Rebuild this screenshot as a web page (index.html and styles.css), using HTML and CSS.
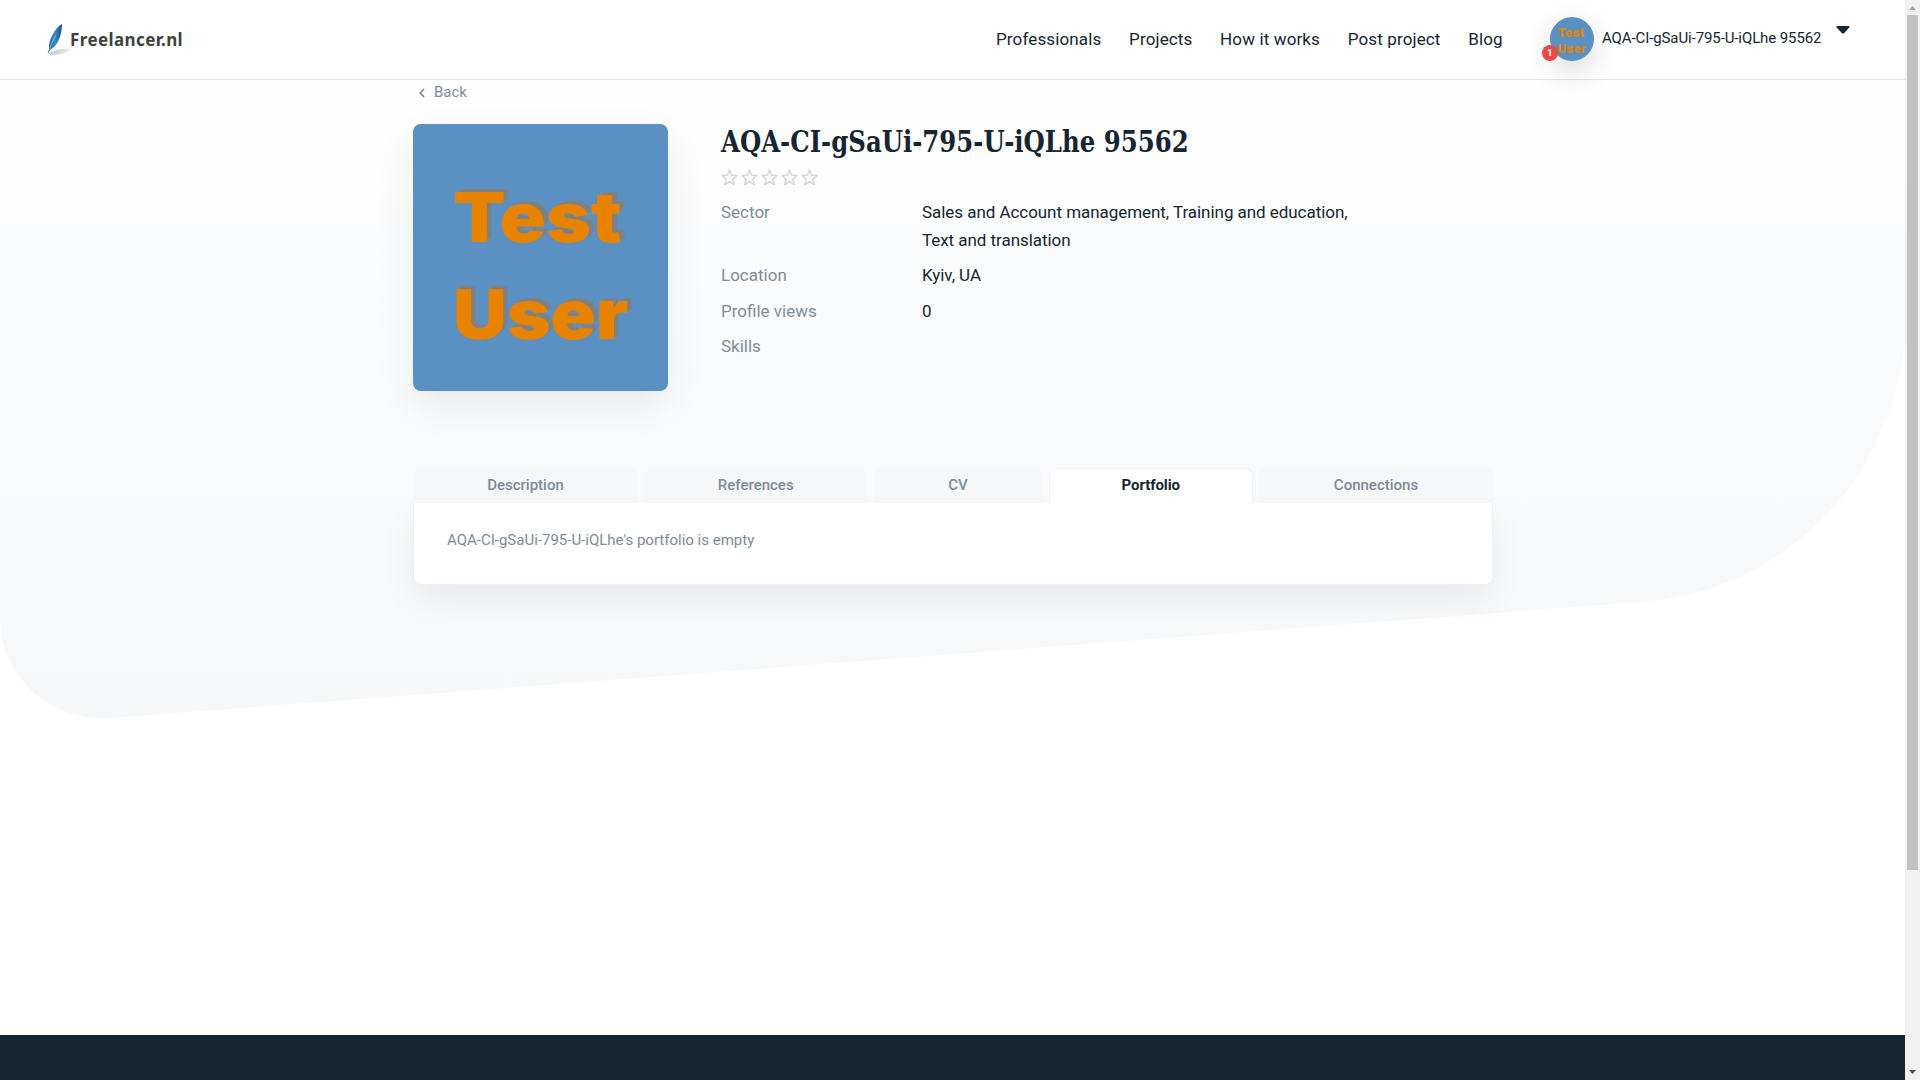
FILE: index.html
```html
<!DOCTYPE html>
<html lang="en">
<head>
<meta charset="utf-8">
<title>AQA-CI-gSaUi-795-U-iQLhe 95562 - Freelancer.nl</title>
<link rel="stylesheet" href="styles.css">
</head>
<body>
<div class="page">
  <svg class="backdrop" width="1905" height="720" viewBox="0 0 1905 720" aria-hidden="true">
    <defs>
      <linearGradient id="shade" x1="0" y1="0" x2="0" y2="1">
        <stop offset="0" stop-color="#fefefe"/>
        <stop offset=".45" stop-color="#fafbfd"/>
        <stop offset="1" stop-color="#f5f7f9"/>
      </linearGradient>
    </defs>
    <path fill="url(#shade)" d="M0 80H1905V340C1890 480 1788 590 1640 602L110 718C50 722 0 677 0 617Z"/>
  </svg>
  <header class="header">
    <a class="logo">
      <svg class="feather" width="26" height="34" viewBox="0 0 26 34">
        <defs>
          <linearGradient id="quill" x1="0" y1="0" x2="1" y2="0">
            <stop offset="0" stop-color="#1c62a8"/>
            <stop offset=".5" stop-color="#3d8ac6"/>
            <stop offset="1" stop-color="#0c4f8f"/>
          </linearGradient>
          <linearGradient id="shadow" x1="0" y1="0" x2="1" y2="0">
            <stop offset="0" stop-color="#c4c4c4"/>
            <stop offset="1" stop-color="#f4f4f4"/>
          </linearGradient>
        </defs>
        <path fill="url(#shadow)" d="M1 31C7 26 17 25 25 26C20 30 12 33 1 31Z"/>
        <path fill="url(#quill)" d="M15 1C8 5 1 17 2 26L.6 31L3.500 26.500C11 23 15 11 15 1Z"/>
        <path fill="none" stroke="#9cc8e8" stroke-width=".7" d="M2.500 27C4 21 6 17 9 12"/>
      </svg>
      <span class="logo-name">Freelancer.nl</span>
    </a>
    <nav class="nav">
      <a>Professionals</a><a>Projects</a><a>How it works</a><a>Post project</a><a>Blog</a>
    </nav>
    <div class="account">
      <div class="avatar"><span>Test</span><span>User</span><b class="badge">1</b></div>
      <span class="account-name">AQA-CI-gSaUi-795-U-iQLhe 95562</span>
      <svg class="caret" width="14" height="8" viewBox="0 0 14 8"><path fill="#152532" d="M1 0H13Q14 .5 13.300 1.500L8 7.200Q7 8 6 7.200L.7 1.500Q0 .5 1 0Z"/></svg>
    </div>
  </header>
  <main class="main">
    <a class="back"><svg width="6" height="10" viewBox="0 0 6 10"><path fill="none" stroke="#7d8b99" stroke-width="1.800" d="M5 1L1.300 5L5 9"/></svg><span>Back</span></a>
    <section class="profile">
      <div class="photo"><span class="first">Test</span><span class="last">User</span></div>
      <div class="info">
        <h1><span class="title">AQA-CI-gSaUi-795-U-iQLhe 95562</span></h1>
        <div class="stars">
          <svg width="97" height="17" viewBox="0 0 97 17">
            <defs><path id="star" fill="none" stroke="#d5d9de" stroke-width="1.600" stroke-linejoin="round" d="M8.500 1L10.600 6.100L16 6.500L11.900 10.100L13.200 15.500L8.500 12.600L3.800 15.500L5.100 10.100L1 6.500L6.400 6.100Z"/></defs>
            <use href="#star"/><use href="#star" x="20"/><use href="#star" x="40"/><use href="#star" x="60"/><use href="#star" x="80"/>
          </svg>
        </div>
        <dl class="fields">
          <dt>Sector</dt><dd>Sales and Account management, Training and education, Text and translation</dd>
          <dt>Location</dt><dd>Kyiv, UA</dd>
          <dt>Profile views</dt><dd>0</dd>
          <dt>Skills</dt><dd></dd>
        </dl>
      </div>
    </section>
    <section class="panel">
      <div class="tabs">
        <a>Description</a><a>References</a><a>CV</a><a class="active">Portfolio</a><a>Connections</a>
      </div>
      <div class="card">AQA-CI-gSaUi-795-U-iQLhe's portfolio is empty</div>
    </section>
  </main>
  <footer class="footer"></footer>
</div>
<aside class="scrollbar">
  <svg width="7" height="4" viewBox="0 0 7 4"><path fill="#a3a3a3" d="M0 4L3.500 0L7 4Z"/></svg>
  <div class="thumb"></div>
  <svg class="down" width="7" height="4" viewBox="0 0 7 4"><path fill="#505050" d="M0 0H7L3.500 4Z"/></svg>
</aside>
</body>
</html>
```
FILE: styles.css
```css
* { box-sizing: border-box; }
body {
  margin: 0;
  height: 1080px;
  display: flex;
  overflow: hidden;
  background: #fff;
  color: #152532;
  font-family: Roboto, sans-serif;
}
.page {
  position: relative;
  width: 1905px;
  height: 1080px;
  display: flex;
  flex-direction: column;
}
.backdrop { position: absolute; left: 0; top: 0; z-index: -1; }
.header {
  height: 80px;
  display: flex;
  align-items: flex-start;
  background: #fff;
  border-bottom: 1px solid #e3e5e7;
}
.logo { display: flex; padding: 23px 0 0 47px; width: 996px; }
.logo-name {
  margin: 5px 0 0 -3px;
  font: 700 17px/24px "Noto Sans", sans-serif;
  letter-spacing: .4px;
  color: #404040;
}
.nav { display: flex; gap: 27.700px; width: 554px; padding-top: 27px; font-size: 17px; line-height: 24px; white-space: nowrap; letter-spacing: .13px; }
.account { display: flex; padding-top: 17px; white-space: nowrap; }
.avatar {
  position: relative;
  width: 44px;
  height: 44px;
  border-radius: 50%;
  background: #5a90c2;
  box-shadow: 0 10px 30px rgba(0, 0, 0, .16);
  color: #d88520;
  font: 900 12px/16px Inter, sans-serif;
  letter-spacing: .1px;
  padding: 8px 0 0 7.500px;
  display: flex;
  flex-direction: column;
}
.badge {
  position: absolute;
  left: -8px;
  top: 28px;
  width: 16px;
  height: 16px;
  border-radius: 50%;
  background: #e94b43;
  color: #fff;
  font: 700 9px/16px Roboto, sans-serif;
  text-align: center;
}
.account-name { margin-left: 8px; font-size: 15px; line-height: 42px; width: 226px; letter-spacing: -.1px; }
.account-name, .caret { flex: none; }
.caret { margin-top: 9px; margin-left: 8px; }
.main { width: 1080px; margin-left: 413px; flex: 1; }
.back { display: flex; align-items: center; gap: 9px; height: 24px; padding: 1px 0 0 6px; color: #7d8b99; font-size: 15px; }
.back span { margin-top: -1px; }
.profile { display: flex; gap: 53px; padding-top: 20px; height: 364px; }
.photo {
  width: 255px;
  height: 267px;
  border-radius: 8px;
  background: #5a90c2;
  box-shadow: 0 15px 40px rgba(0, 0, 0, .07);
  color: #e88300;
  font: 900 69px/97px Inter, sans-serif;
  text-shadow: 4px -3px 0 #808080;
  padding: 45px 0 0 40px;
  display: flex;
  flex-direction: column;
  align-items: flex-start;
}
.photo span { transform-origin: 0 50%; }
.first { transform: scaleX(1.11); }
.last { transform: scaleX(1.08); }
.info { width: 650px; }
h1 { margin: 0; font: 700 29px/36px "Roboto Slab", "DejaVu Serif Condensed", "DejaVu Serif", serif; white-space: nowrap; }
.title { display: inline-block; transform: scaleX(.935); transform-origin: 0 50%; }
.stars { height: 17px; margin-top: 9px; }
.stars svg { display: block; }
.fields {
  display: grid;
  grid-template-columns: 201px 440px;
  row-gap: 7.300px;
  margin: 12px 0 0;
  font-size: 17px;
  line-height: 28px;
}
dt { color: #7d8b99; }
dd { margin: 0; letter-spacing: -.05px; }
.tabs { display: grid; grid-template-columns: 225px 223px 169px 204px 234px; justify-content: space-between; height: 34px; font-size: 15px; font-weight: 500; line-height: 35px; text-align: center; color: #7d8b99; }
.tabs a { background: #f5f7f9; border-radius: 8px 8px 0 0; }
.tabs .active { background: #fff; color: #152532; border: 1px solid #efeffd; border-bottom: 0; line-height: 33px; font-weight: 700; letter-spacing: -.1px; }
.card {
  height: 83px;
  padding: 25px 33px;
  border: 1px solid #efeffa;
  border-top: 0;
  border-radius: 0 0 8px 8px;
  background: #fff;
  box-shadow: 0 15px 35px rgba(0, 0, 0, .06);
  color: #7d8b99;
  font-size: 15px;
  line-height: 26px;
}
.footer { height: 45px; background: #152532; }
.scrollbar { width: 15px; height: 1080px; background: #f1f1f1; display: flex; flex-direction: column; align-items: center; padding: 6px 0; }
.scrollbar svg { flex: none; }
.thumb { width: 11px; height: 855px; margin-top: 5px; background: #c1c1c1; }
.down { margin-top: auto; }
```
